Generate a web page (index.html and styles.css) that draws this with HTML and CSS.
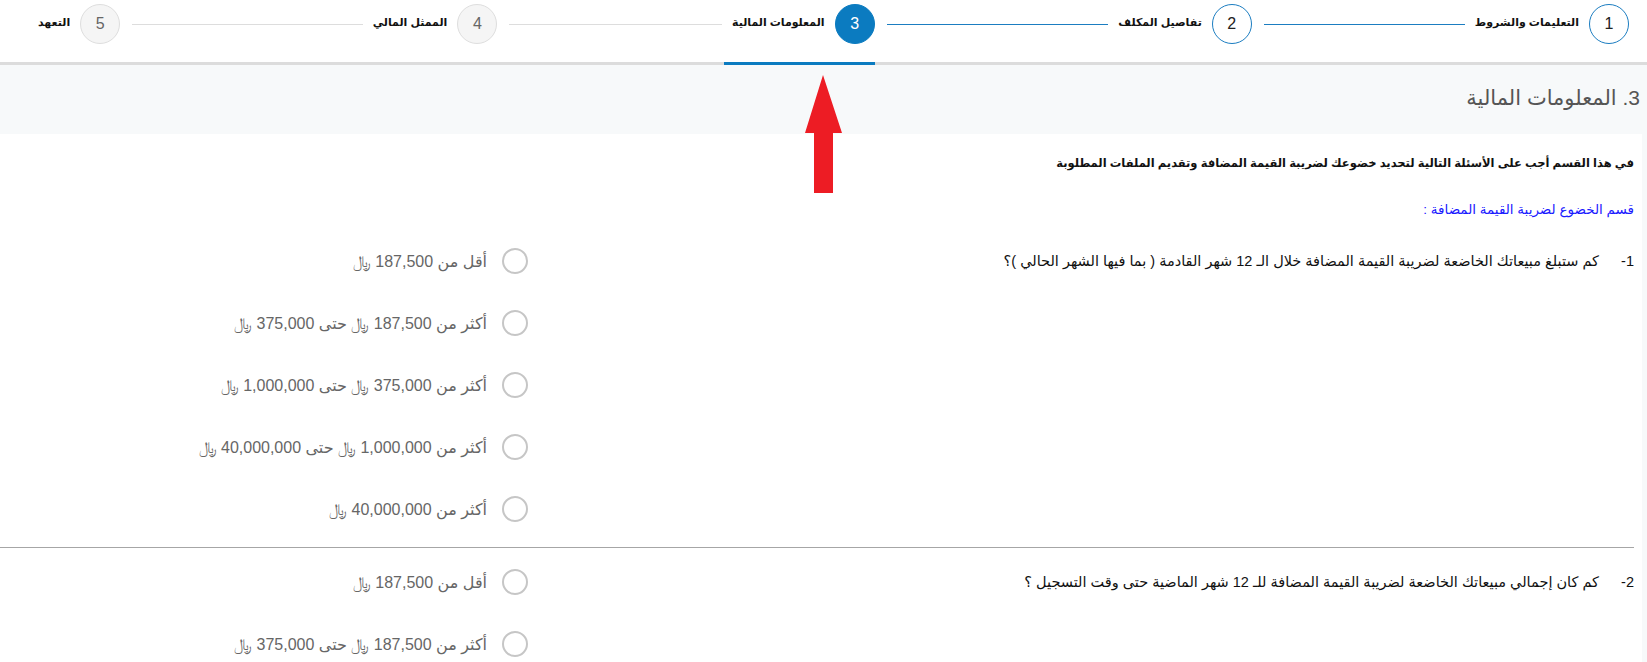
FILE: index.html
```html
<!DOCTYPE html>
<html lang="ar" dir="rtl">
<head>
<meta charset="utf-8">
<title>المعلومات المالية</title>
<link rel="stylesheet" href="styles.css">
</head>
<body>
<header class="stepper">
  <div class="step done">
    <div class="step-head"><span class="circle">1</span><span class="label">التعليمات والشروط</span></div>
    <span class="line"></span>
  </div>
  <div class="step done">
    <div class="step-head"><span class="circle">2</span><span class="label">تفاصيل المكلف</span></div>
    <span class="line"></span>
  </div>
  <div class="step active">
    <div class="step-head"><span class="circle">3</span><span class="label">المعلومات المالية</span></div>
    <span class="line"></span>
  </div>
  <div class="step">
    <div class="step-head"><span class="circle">4</span><span class="label">الممثل المالي</span></div>
    <span class="line"></span>
  </div>
  <div class="step last">
    <div class="step-head"><span class="circle">5</span><span class="label">التعهد</span></div>
  </div>
</header>

<h2 class="section-title">3. المعلومات المالية</h2>

<main class="content">
  <p class="intro">في هذا القسم أجب على الأسئلة التالية لتحديد خضوعك لضريبة القيمة المضافة وتقديم الملفات المطلوبة</p>
  <p class="subtitle">قسم الخضوع لضريبة القيمة المضافة :</p>

  <section class="question">
    <div class="q-text"><span class="q-num">1-</span><span>كم ستبلغ مبيعاتك الخاضعة لضريبة القيمة المضافة خلال الـ 12 شهر القادمة ( بما فيها الشهر الحالي )؟</span></div>
    <div class="options">
      <label class="option"><span class="radio"></span><span>أقل من 187,500 ﷼</span></label>
      <label class="option"><span class="radio"></span><span>أكثر من 187,500 ﷼ حتى 375,000 ﷼</span></label>
      <label class="option"><span class="radio"></span><span>أكثر من 375,000 ﷼ حتى 1,000,000 ﷼</span></label>
      <label class="option"><span class="radio"></span><span>أكثر من 1,000,000 ﷼ حتى 40,000,000 ﷼</span></label>
      <label class="option"><span class="radio"></span><span>أكثر من 40,000,000 ﷼</span></label>
    </div>
  </section>

  <hr class="divider">

  <section class="question second">
    <div class="q-text"><span class="q-num">2-</span><span>كم كان إجمالي مبيعاتك الخاضعة لضريبة القيمة المضافة للـ 12 شهر الماضية حتى وقت التسجيل ؟</span></div>
    <div class="options">
      <label class="option"><span class="radio"></span><span>أقل من 187,500 ﷼</span></label>
      <label class="option"><span class="radio"></span><span>أكثر من 187,500 ﷼ حتى 375,000 ﷼</span></label>
    </div>
  </section>
</main>

<svg class="arrow" width="40" height="120" viewBox="0 0 40 120" aria-hidden="true">
  <polygon points="19,0 38,58 29,58 29,118 10,118 10,58 1,58" fill="#ed1c24"/>
</svg>
</body>
</html>
```

FILE: styles.css
```css
html, body {
  margin: 0;
  padding: 0;
}

body {
  background: #f7f9fa;
  font-family: "Liberation Sans", "DejaVu Sans", Arial, sans-serif;
  direction: rtl;
  position: relative;
  color: #111;
  overflow: hidden;
}

/* ---------- stepper ---------- */
.stepper {
  display: flex;
  height: 62px;
  background: #fff;
  border-bottom: 3px solid #dcdcdc;
  padding: 0 18px 0 30px;
}

.step {
  flex: 1;
  display: flex;
  align-items: flex-start;
}

.step.last {
  flex: none;
}

.step-head {
  position: relative;
  display: flex;
  align-items: flex-start;
  gap: 10px;
  height: 62px;
  box-sizing: border-box;
  padding: 4px 0 0 8px;
}

.step.active .step-head::after {
  content: "";
  position: absolute;
  left: 0;
  right: 0;
  bottom: -3px;
  height: 3px;
  background: #0b7bc0;
}

.circle {
  width: 40px;
  height: 40px;
  box-sizing: border-box;
  border-radius: 50%;
  border: 1px solid #dedede;
  background: #f5f5f5;
  color: #666;
  display: flex;
  align-items: center;
  justify-content: center;
  font-size: 16px;
}

.done .circle {
  background: #fff;
  border-color: #1b7dc1;
  color: #222;
}

.active .circle {
  background: #0b7bc0;
  border-color: #0b7bc0;
  color: #fff;
}

.label {
  font-size: 11px;
  font-weight: bold;
  line-height: 36px;
  color: #111;
  white-space: nowrap;
}

.line {
  flex: 1;
  height: 1px;
  background: #dddddd;
  margin: 24px 2px 0 12px;
}

.done .line {
  background: #1b7dc1;
}

/* ---------- heading band ---------- */
.section-title {
  margin: 0;
  height: 69px;
  box-sizing: border-box;
  padding: 20px 7px 0 0;
  font-size: 21px;
  line-height: 26px;
  font-weight: normal;
  color: #555;
}

/* ---------- content ---------- */
.content {
  background: #fff;
  margin-right: 5px;
  padding: 19px 8px 0 0;
}

.intro {
  margin: 0;
  font-size: 11.5px;
  line-height: 20px;
  font-weight: bold;
  color: #111;
}

.subtitle {
  margin: 27px 0 10px;
  font-size: 13.5px;
  line-height: 20px;
  color: #1a1aff;
}

.question {
  display: flex;
  padding-bottom: 7px;
}

.question.second {
  padding-top: 3px;
  padding-bottom: 0;
}

.q-text {
  flex: 1;
  display: flex;
  align-items: flex-start;
  padding-top: 21px;
  font-size: 14.5px;
  line-height: 20px;
  color: #111;
}

.q-num {
  flex: none;
  width: 35px;
}

.options {
  flex: none;
  width: 528px;
}

.option {
  height: 62px;
  display: flex;
  align-items: center;
  gap: 15px;
  font-size: 16px;
  color: #666;
}

.radio {
  flex: none;
  width: 26px;
  height: 26px;
  box-sizing: border-box;
  border: 2px solid #c6c6c6;
  border-radius: 50%;
  background: #fff;
}

.divider {
  margin: 0;
  border: 0;
  height: 1px;
  background: #a6a6a6;
}

/* ---------- annotation arrow ---------- */
.arrow {
  position: absolute;
  left: 804px;
  top: 75px;
}
```
